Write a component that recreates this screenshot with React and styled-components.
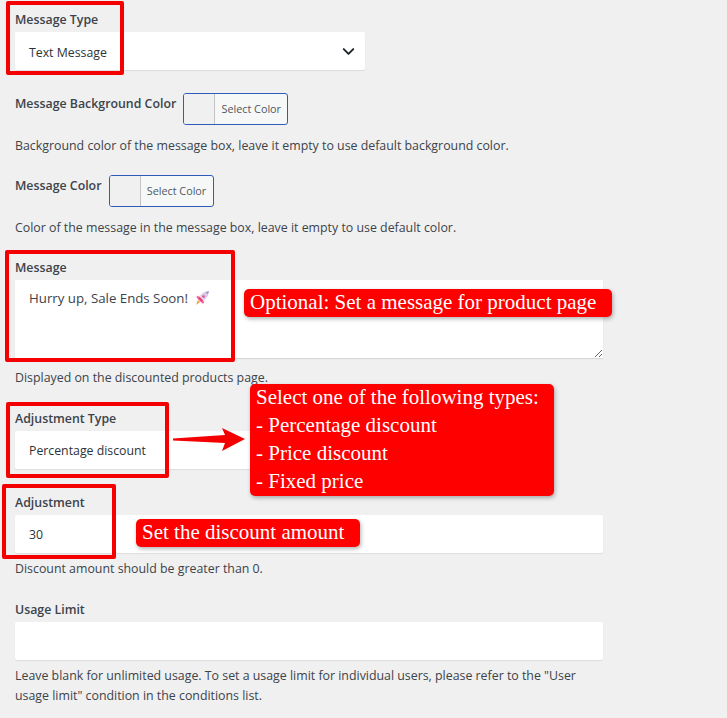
import React from 'react'
import styled, { createGlobalStyle } from 'styled-components'
import { ChevronDown } from 'lucide-react'

const GlobalStyle = createGlobalStyle`
    html, body {
        margin: 0;
        padding: 0;
        background: #f0f0f0;
    }
    body {
        font-family: "Open Sans", "Noto Sans", sans-serif;
        color: #3c434a;
    }
`

const Page = styled.div`
    position: relative;
    width: 727px;
    height: 718px;
    overflow: hidden;
    padding: 10px 0 0 15px;
    box-sizing: border-box;
`

const Field = styled.div`
    margin-top: ${props => props.$top || 0}px;
`

const Label = styled.div`
    font-size: 12.35px;
    line-height: 18px;
    font-weight: 600;
    color: #3c434a;
    padding-top: 1px;
    margin-bottom: 3px;
`

const ColorRow = styled.div`
    display: flex;
    align-items: flex-start;
    gap: 7px;

    ${Label} {
        margin: 1px 0 0;
    }
`

const ColorButton = styled.div`
    display: flex;
    width: 105px;
    height: 32px;
    box-sizing: border-box;
    border: 1px solid #2f5cbc;
    border-radius: 3px;
    background: #f6f7f7;

    .swatch {
        width: 30px;
        background: #f0f0f0;
        border-right: 1px solid #c3c4c7;
        border-radius: 2px 0 0 2px;
    }
    .text {
        flex: 1;
        font-size: 10.8px;
        line-height: 30px;
        text-align: center;
        color: #50575e;
    }
`

const Box = styled.div`
    width: ${props => props.$wide ? 588 : 350}px;
    height: 38px;
    box-sizing: border-box;
    padding: ${props => props.$drop ? 2 : 1}px 14px 0;
    display: flex;
    align-items: center;
    justify-content: space-between;
    background: #fff;
    border-radius: 2px;
    box-shadow: 0 1px 1px rgba(0, 0, 0, 0.08);
    font-size: 12.3px;
    color: #2c3338;

    svg {
        margin: -2px -7px 0 0;
        color: #1d2327;
    }
`

const MessageArea = styled.div`
    width: 588px;
    height: 78px;
    box-sizing: border-box;
    padding: 8px 14px;
    background: #fff;
    box-shadow: 0 1px 1px rgba(0, 0, 0, 0.1);
    font-size: 13.25px;
    line-height: 20px;
    color: #3c434a;
    overflow: auto;
    resize: both;

    svg {
        margin-left: 6px;
        vertical-align: -3px;
    }
`

const Help = styled.div`
    margin-top: ${props => props.$top}px;
    font-size: 12.37px;
    line-height: 20px;
    color: #3c434a;
    width: 590px;
`

const Highlight = styled.div`
    position: absolute;
    left: ${props => props.$x}px;
    top: ${props => props.$y}px;
    width: ${props => props.$w}px;
    height: ${props => props.$h}px;
    box-sizing: border-box;
    border: 4px solid #f50000;
    border-radius: 2px;
`

const Callout = styled.div`
    position: absolute;
    left: ${props => props.$x}px;
    top: ${props => props.$y}px;
    width: ${props => props.$w}px;
    box-sizing: border-box;
    padding: 0 6px;
    background: #fe0000;
    border-radius: 5px;
    box-shadow: 1px 2px 4px rgba(0, 0, 0, 0.3);
    font-family: "Liberation Serif", "Times New Roman", serif;
    font-size: 21px;
    line-height: 28px;
    color: #fff;

    p {
        margin: -1px 0 1px;
    }
`

const Arrow = styled.svg`
    position: absolute;
    left: 172px;
    top: 427px;
`

const Rocket = () => (
    <svg width="16" height="16" viewBox="0 0 16 16">
        <path d="M15 1c-4 0-7 2-9 5l4 4c3-2 5-5 5-9z" fill="#d9c9e8" />
        <path d="M5.500 6.500 9.500 10.500 7.500 12.500 3.500 8.500z" fill="#ee3f7e" />
        <path d="M12 2.500 15 1 13.500 4z" fill="#8f86c9" />
        <circle cx="9.500" cy="6.500" r="1.300" fill="#e0508a" />
        <path d="M4 10l2 2-4 3z" fill="#f09a3e" />
        <path d="M5 5.500 2 7l2 1.500zM10.500 11 9 14l-1.500-2z" fill="#f0508a" />
    </svg>
)

const App = () => (
    <Page>
        <GlobalStyle />
        <Field>
            <Label>Message Type</Label>
            <Box $drop>
                Text Message
                <ChevronDown size={19} strokeWidth={2.4} />
            </Box>
        </Field>
        <Field $top={23}>
            <ColorRow>
                <Label>Message Background Color</Label>
                <ColorButton><div className="swatch" /><div className="text">Select Color</div></ColorButton>
            </ColorRow>
            <Help $top={11}>Background color of the message box, leave it empty to use default background color.</Help>
        </Field>
        <Field $top={19}>
            <ColorRow>
                <Label>Message Color</Label>
                <ColorButton><div className="swatch" /><div className="text">Select Color</div></ColorButton>
            </ColorRow>
            <Help $top={11}>Color of the message in the message box, leave it empty to use default color.</Help>
        </Field>
        <Field $top={20}>
            <Label>Message</Label>
            <MessageArea>Hurry up, Sale Ends Soon!<Rocket /></MessageArea>
            <Help $top={10}>Displayed on the discounted products page.</Help>
        </Field>
        <Field $top={21}>
            <Label>Adjustment Type</Label>
            <Box>Percentage discount</Box>
        </Field>
        <Field $top={24}>
            <Label>Adjustment</Label>
            <Box $wide>30</Box>
            <Help $top={6}>Discount amount should be greater than 0.</Help>
        </Field>
        <Field $top={21}>
            <Label>Usage Limit</Label>
            <Box $wide />
            <Help $top={6}>
                Leave blank for unlimited usage. To set a usage limit for individual users, please refer to the "User usage limit" condition in the conditions list.
            </Help>
        </Field>

        <Highlight $x={6} $y={1} $w={118} $h={74} />
        <Highlight $x={5} $y={250} $w={230} $h={112} />
        <Highlight $x={6} $y={402} $w={163} $h={76} />
        <Highlight $x={2} $y={484} $w={114} $h={75} />

        <Callout $x={244} $y={289} $w={368}><p>Optional: Set a message for product page</p></Callout>
        <Callout $x={250} $y={384} $w={304}>
            <p>
                Select one of the following types:<br />
                - Percentage discount<br />
                - Price discount<br />
                - Fixed price
            </p>
        </Callout>
        <Callout $x={136} $y={519} $w={224}><p>Set the discount amount</p></Callout>

        <Arrow width="74" height="26" viewBox="0 0 74 26">
            <path d="M1 11.500 53 8 50 1 73 12 50 24 53 16 1 13.500z" fill="#f50000" />
        </Arrow>
    </Page>
)

export default App
